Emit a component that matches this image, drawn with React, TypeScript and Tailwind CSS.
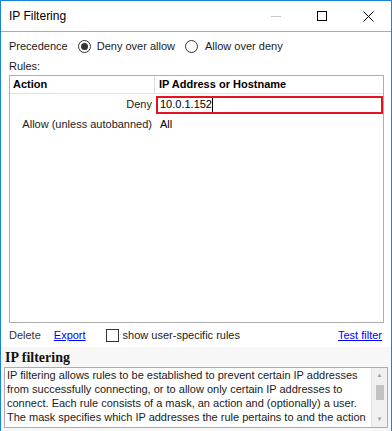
import React from "react";

export default function App() {
  const font = { fontFamily: '"Liberation Sans", Arial, sans-serif' };
  return (
    <div className="w-[392px] h-[431px] border border-[#1883d7] bg-white flex flex-col text-[11px] text-[#000] whitespace-nowrap" style={font}>
      {/* Title bar */}
      <div className="h-[30px] flex items-center shrink-0">
        <div className="pl-2 flex-1 text-[12px] leading-none">IP Filtering</div>
        <div className="w-[46px] h-full flex items-center justify-center">
          <div className="w-[10px] h-px bg-[#c8c8c8]" />
        </div>
        <div className="w-[46px] h-full flex items-center justify-center">
          <div className="w-[10px] h-[10px] border border-black" />
        </div>
        <div className="w-[46px] h-full flex items-center justify-center">
          <svg width="11" height="11" viewBox="0 0 11 11">
            <path d="M0.5 0.5 L10.5 10.5 M10.5 0.5 L0.5 10.5" stroke="#000" strokeWidth="1" />
          </svg>
        </div>
      </div>
      <div className="h-px bg-[#acacac] shrink-0" />
      {/* Body */}
      <div className="flex-1 flex flex-col px-2">
        <div className="h-[26px] mt-[1px] flex items-center text-[#1a1a1a]">
          <span>Precedence</span>
          <span className="ml-[10px] w-[13px] h-[13px] rounded-full border border-[#333] flex items-center justify-center">
            <span className="w-[7px] h-[7px] rounded-full bg-[#333]" />
          </span>
          <span className="ml-[6px]">Deny over allow</span>
          <span className="ml-[10px] w-[13px] h-[13px] rounded-full border border-[#333]" />
          <span className="ml-[7px]">Allow over deny</span>
        </div>
        <div className="h-[15px] flex items-center text-[#1a1a1a]">Rules:</div>
        <div className="mt-[1px] h-[248px] w-[375px] border border-[#adadad] flex flex-col">
          <div className="h-[18px] flex border-b border-[#e0e0e0] font-bold">
            <div className="w-[145px] pl-[3px] flex items-center border-r border-[#e0e0e0]">Action</div>
            <div className="pl-[4px] flex items-center">IP Address or Hostname</div>
          </div>
          <div className="h-[20px] flex items-center pt-[1px]">
            <div className="w-[144px] text-right pr-[2px] text-[#1a1a1a]">Deny</div>
            <div className="ml-[2px] h-[18px] w-[227px] border-2 border-[#e81123] flex items-center pl-[2px]">
              <span>10.0.1.152</span>
              <span className="w-px h-[14px] bg-black" />
            </div>
          </div>
          <div className="h-[21px] flex items-center">
            <div className="w-[144px] text-right pr-[2px] text-[#1a1a1a]">Allow (unless autobanned)</div>
            <div className="ml-[6px]">All</div>
          </div>
        </div>
        <div className="h-[24px] flex items-center text-[#1a1a1a]">
          <span className="text-[#333]">Delete</span>
          <span className="ml-[13px] text-[#0000ff] underline">Export</span>
          <span className="ml-[20px] w-[13px] h-[13px] border border-[#333] bg-white" />
          <span className="ml-[4px]">show user-specific rules</span>
          <span className="ml-auto mr-[1px] text-[#0000ff] underline">Test filter</span>
        </div>
      </div>
      <div className="bg-[#f7f7f7] flex flex-col px-[3px] pb-[3px] shrink-0">
        <div className="h-[20px] flex items-center pl-[1px] font-bold text-[14px] text-[#111]" style={{ fontFamily: '"Liberation Serif", serif' }}>IP filtering</div>
        <div className="h-[61px] border border-[#acacac] bg-white flex">
          <div className="flex-1 pl-[2px] text-[11px] leading-[14px] text-[#1a1a1a] overflow-hidden">
            <div>IP filtering allows rules to be established to prevent certain IP addresses</div>
            <div>from successfully connecting, or to allow only certain IP addresses to</div>
            <div>connect. Each rule consists of a mask, an action and (optionally) a user.</div>
            <div>The mask specifies which IP addresses the rule pertains to and the action</div>
          </div>
          <div className="w-[16px] border-l border-[#e6e6e6] bg-[#f0f0f0] flex flex-col items-center">
            <div className="h-[15px] flex items-center justify-center text-[#a0a0a0] text-[6px]">▲</div>
            <div className="w-[8px] h-[15px] bg-[#c2c2c2] mt-[2px]" />
            <div className="flex-1" />
            <div className="h-[15px] flex items-center justify-center text-[#a0a0a0] text-[6px]">▼</div>
          </div>
        </div>
      </div>
    </div>
  );
}
